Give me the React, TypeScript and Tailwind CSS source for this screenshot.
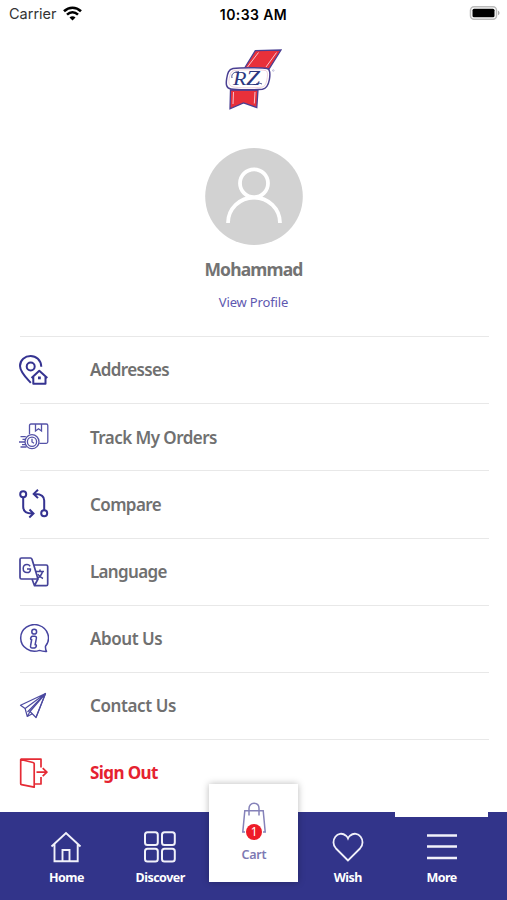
import type { ReactNode } from "react";

const Logo = () => (
  <svg width="60" height="64" viewBox="0 0 60 64" fill="none">
    <path d="M31.3 3.7 57 3 45 22H20z" fill="#e8303a" stroke="#4a3f92" strokeWidth="1.3" />
    <path d="M34.5 5.5 23.5 20M52.5 5.5 42 20" stroke="#f6c4cd" strokeWidth="1" />
    <path d="M6.5 43H34l-1.2 17.5L19.5 56 6 61.8z" fill="#e8303a" stroke="#4a3f92" strokeWidth="1.3" />
    <path d="M9.5 45 9 57M31 45l-.7 11.5" stroke="#f6c4cd" strokeWidth="1" />
    <path
      d="M9 21.5C16 20.6 38 20.6 43 21.5c3.500.8 3.300 5.500 2.400 11-1 5.600-2.600 9-7 9.800-6 .6-26 .6-31.500-.3C2 41.300 1.800 37 2.700 31.500 3.600 26 4.500 22.500 9 21.500z"
      fill="#fff"
      stroke="#4a3f92"
      strokeWidth="1.500"
    />
    <path
      d="M10 23.500C17 22.500 37 22.500 41.500 23.500c2.500.8 2.200 4.600 1.500 8.500-.9 5-2 7.500-5.500 8.200-6 .8-23.500.8-28.500-.3-4.300-1-4.500-4.400-3.800-8.400.8-4.200 1.600-7 4.800-8z"
      stroke="#e2b4c4"
      strokeWidth=".6"
    />
    <text
      x="9"
      y="37.500"
      fontFamily="'Liberation Serif', serif"
      fontStyle="italic"
      fontSize="19"
      fill="#2c377f"
      textLength="13.500"
      lengthAdjust="spacingAndGlyphs"
    >
      R
    </text>
    <text
      x="22"
      y="38"
      fontFamily="'Liberation Serif', serif"
      fontStyle="italic"
      fontSize="20"
      fill="#2c377f"
      textLength="14"
      lengthAdjust="spacingAndGlyphs"
    >
      Z
    </text>
    <path d="M8 31c-1-4 2-6.300 7-6.300M31 38c2.500-2.500 4.500-2 7-1" stroke="#2c377f" strokeWidth=".9" />
    <circle cx="49.300" cy="23.500" r=".8" stroke="#9a99c6" strokeWidth=".6" />
  </svg>
);

const AddressIcon = () => (
  <svg width="30" height="30" viewBox="0 0 30 30" fill="none" stroke="#353391" strokeWidth="2">
    <path d="M11.800 27.800C7 22.500 1 17 1 11 1 5 6 1 11.600 1 17 1 22 5 22.300 11.700" />
    <circle cx="11.700" cy="11.500" r="4" />
    <path d="m12.500 23 7.800-7.300 8 7.300M14.300 22v6.800h12.200V22" strokeLinejoin="round" />
    <path d="M19 21.500h2.800v2.800H19z" fill="#353391" stroke="none" />
  </svg>
);

const TrackIcon = () => (
  <svg width="30" height="30" viewBox="0 0 30 30" fill="none" stroke="#5553a8" strokeWidth="1.300">
    <path d="M10.500 12V3.500C10.500 2.500 11 2 12 2h15.300c1 0 1.500.5 1.500 1.500v16.300c0 1-.5 1.500-1.500 1.500h-7" />
    <path d="M16.500 2v7l3-2.300 3 2.300V2" />
    <circle cx="13" cy="19.700" r="7" />
    <circle cx="13" cy="19.700" r="4.600" />
    <path d="M13 16.800v3.200l2 1.200M1.500 14.700h5.300M3.500 17.300H6M0 20h6M3 22.600h3.200M1.500 25h6" />
  </svg>
);

const CompareIcon = () => (
  <svg width="30" height="30" viewBox="0 0 30 30" fill="none" stroke="#353391" strokeWidth="2">
    <circle cx="4.200" cy="5.200" r="3" />
    <circle cx="25.200" cy="24.200" r="3" />
    <path d="M4.200 8.500v9.200c0 4.500 3 6.800 8.800 6.800M10.500 20.500l4 4-4.200 4" />
    <path d="M25.200 21v-9.500c0-4.200-3-6.600-8.900-6.600M19 .8l-4.300 4.100 4.300 4.200" />
  </svg>
);

const LanguageIcon = () => (
  <svg width="30" height="30" viewBox="0 0 30 30" fill="none" stroke="#454399" strokeWidth="1.700" strokeLinejoin="round">
    <path d="M2.500 1h9c.8 0 1.200.4 1.500 1.200L19 22H2.500C1.500 22 1 21.500 1 20.500v-18C1 1.500 1.500 1 2.500 1z" />
    <path d="M14.500 8h12.700c1 0 1.500.5 1.500 1.500v17.700c0 1-.5 1.500-1.500 1.500H15.500L13 22M15.500 28.500 19 22" />
    <path d="M11.200 9.200C10.300 8.100 9.300 7.600 8 7.600c-2.300 0-3.800 1.800-3.800 4s1.500 4 3.800 4c2.200 0 3.500-1.300 3.500-3.700H8" strokeWidth="1.500" />
    <path d="M17 14.500h8M21 12.500v2M23.500 14.500c-.8 3.500-2.600 5.500-5.500 7M18.800 17c1.300 2.300 2.700 3.500 5.200 4.500" strokeWidth="1.500" />
  </svg>
);

const AboutIcon = () => (
  <svg width="30" height="30" viewBox="0 0 30 30" fill="none" stroke="#4644a0" strokeWidth="1.500" strokeLinejoin="round">
    <path d="M26.500 22.200A13.900 13.300 0 1 0 20.500 26.400c2 .7 4.200 1.100 7 1-.9-1.700-1.200-3.300-1-5.200z" />
    <circle cx="15.200" cy="7.700" r="2.400" />
    <path d="M13.200 12.200h2.500c1.300 0 1.900.8 1.700 2l-1.300 6.600h.8c.8 0 .6 2.800-1.300 3.200h-2.300c-1.500 0-2-1-1.700-2.300l1.100-6.200h-.9c-.5-1 0-2.700 1.400-3.300z" />
  </svg>
);

const ContactIcon = () => (
  <svg width="30" height="30" viewBox="0 0 30 30" fill="none" stroke="#4c4aa0" strokeWidth="1.200" strokeLinejoin="round">
    <path d="M26.500 2.500 1.500 14.200l4.600 3.300L26.500 2.500 11 20.500l6 6z" />
    <path d="M26.500 2.500 17 26.500M6.100 17.500 8.300 25.500 11 20.500M8.300 25.500l5-2.800M26.500 2.500 8.500 21" />
  </svg>
);

const SignOutIcon = () => (
  <svg width="30" height="30" viewBox="0 0 30 30" fill="none" stroke="#e52b35" strokeWidth="1.700" strokeLinejoin="round">
    <path d="M1.700 1.500 14 4.500c.8.200 1.200.5 1.200 1.200V29.200L2.500 26.700c-.5-.1-.8-.5-.8-1z" />
    <path d="M1.700 1.200h20.300V9.500M15.500 26h6.500V19M17.500 14.200h10M23.700 10.200l4.200 4-4.200 4" />
  </svg>
);

const menu: { label: string; icon: ReactNode; spacing: string }[] = [
  { label: "Addresses", icon: <AddressIcon />, spacing: "tracking-[-0.63px]" },
  { label: "Track My Orders", icon: <TrackIcon />, spacing: "tracking-[-0.55px]" },
  { label: "Compare", icon: <CompareIcon />, spacing: "tracking-[-0.6px]" },
  { label: "Language", icon: <LanguageIcon />, spacing: "tracking-[-0.68px]" },
  { label: "About Us", icon: <AboutIcon />, spacing: "tracking-[-0.44px]" },
  { label: "Contact Us", icon: <ContactIcon />, spacing: "tracking-[-0.39px]" },
  { label: "Sign Out", icon: <SignOutIcon />, spacing: "tracking-[-0.6px]" },
];

const StatusBar = () => (
  <header className="grid h-7 grid-cols-3 items-center pr-[7px] pl-[9px] font-['Inter',sans-serif] text-black">
    <div className="flex items-center gap-1.5">
      <span className="text-[14.5px] text-[#333]">Carrier</span>
      <svg className="-mt-0.5" width="19" height="15" viewBox="0 0 19 15" fill="none" stroke="#000" strokeWidth="2.600">
        <path d="M1 5.300C6 .6 13 .6 18 5.300M4 8.600c3.300-3 7.700-3 11 0" />
        <path d="m9.500 14.500-3-3.100c1.700-1.500 4.300-1.500 6 0z" fill="#000" stroke="none" />
      </svg>
    </div>
    <span className="-ml-0.5 text-center text-[14px] font-semibold tracking-[0.4px] whitespace-nowrap">10:33 AM</span>
    <svg className="-mt-0.5 justify-self-end" width="31" height="16" viewBox="0 0 31 16">
      <rect x="1.500" y="1.700" width="26" height="12.600" rx="3.500" fill="#fff" stroke="#bbb" strokeWidth="1.500" />
      <rect x="3.500" y="3.700" width="22" height="8.600" rx="1.500" />
      <path d="M29 5.800c2 .7 2 3.700 0 4.400z" fill="#aaa" />
    </svg>
  </header>
);

const NavItem = ({ label, children }: { label: string; children: ReactNode }) => (
  <button className="relative flex flex-1 flex-col items-center pt-[19px] text-[12.5px] leading-4 font-bold tracking-[-0.5px] text-white">
    {children}
    <span className="mt-[7px]">{label}</span>
  </button>
);

const BottomNav = () => (
  <nav className="flex h-[88px] shrink-0 bg-[#32348a] pr-[18.5px] pl-[19.5px]">
    <NavItem label="Home">
      <svg width="32" height="32" viewBox="0 0 32 32" fill="none" stroke="#f1f1fa" strokeWidth="1.900">
        <path d="M1.500 15.500 16 2l14.500 13.500M4.500 13v17.200h23.200V13M12.500 30V19h7v11" />
      </svg>
    </NavItem>
    <NavItem label="Discover">
      <svg width="32" height="32" viewBox="0 0 32 32" fill="none" stroke="#f1f1fa" strokeWidth="2">
        <rect x="1" y="1.200" width="12.800" height="12.800" rx="2.500" />
        <rect x="18" y="1.200" width="12.800" height="12.800" rx="2.500" />
        <rect x="1" y="17.700" width="12.800" height="12.800" rx="2.500" />
        <rect x="18" y="17.700" width="12.800" height="12.800" rx="2.500" />
      </svg>
    </NavItem>
    <div className="flex flex-1 justify-center">
      <button className="-mt-7 flex h-[98px] w-[89px] flex-col items-center bg-white pt-[18px] text-[12.5px] leading-4 font-semibold tracking-[-0.2px] text-[#7d79b3] shadow-[0_0_7px_rgba(0,0,0,0.28)]">
        <span className="relative">
          <svg width="26" height="34" viewBox="0 0 26 34" fill="none" stroke="#8582b9" strokeWidth="1.500">
            <path d="M8 13.500V6.500C8 3.300 10 1.200 13 1.200s5 2.100 5 5.300v7M4 30H1.800L3.800 8.800h18.400l2 21.200H22" />
          </svg>
          <span className="absolute top-[22px] left-[5px] flex size-4 items-center justify-center rounded-full bg-[#ee1c28] text-[12px] font-normal text-white">
            1
          </span>
        </span>
        <span className="mt-[11px]">Cart</span>
      </button>
    </div>
    <NavItem label="Wish">
      <svg width="32" height="32" viewBox="0 0 32 32" fill="none" stroke="#f1f1fa" strokeWidth="1.800">
        <path d="M16 29.500 4 17.500C-3 10 6-2 14 4.700c.9.800 1.500 1.700 2 2.800.5-1.100 1.100-2 2-2.800C26-2 35 10 28 17.500z" />
      </svg>
    </NavItem>
    <NavItem label="More">
      <span className="absolute top-0 left-0 h-[5px] w-full bg-white" />
      <svg width="32" height="32" viewBox="0 0 32 32" stroke="#f1f1fa" strokeWidth="2.500">
        <path d="M1 4.500h30M1 15.500h30M1 27h30" />
      </svg>
    </NavItem>
  </nav>
);

const App = () => {
  return (
    <div className="flex h-[900px] w-[507px] flex-col overflow-hidden bg-white font-['Noto_Sans',sans-serif]">
      <StatusBar />
      <main className="min-h-0 flex-1">
        <section className="flex flex-col items-center pt-[19px]">
          <Logo />
          <svg className="mt-[37px]" width="98" height="97" viewBox="0 0 98 97" fill="none">
            <ellipse cx="49" cy="48.500" rx="48.800" ry="48.500" fill="#d2d2d2" />
            <g stroke="#fff" strokeWidth="3.800">
              <circle cx="49" cy="35.300" r="14" />
              <path d="M23 75A26 25.500 0 0 1 75 75" />
            </g>
          </svg>
          <h1 className="mt-[11px] text-[17.5px] leading-[26px] font-bold tracking-[-0.85px] text-[#737373]">Mohammad</h1>
          <a className="mt-[10px] text-[13px] leading-5 tracking-[-0.15px] text-[#5e58b0]">View Profile</a>
        </section>
        <ul className="mt-6 mr-[18px] ml-5">
          {menu.map((item) => (
            <li
              key={item.label}
              className="flex h-[67.2px] items-center border-t border-[#e8e8e8] text-[17px] font-semibold text-[#707070] last:font-bold last:text-[#e52230]"
            >
              <span className="-ml-px w-[71px]">{item.icon}</span>
              <span className={item.spacing}>{item.label}</span>
            </li>
          ))}
        </ul>
      </main>
      <BottomNav />
    </div>
  );
};

export default App;
